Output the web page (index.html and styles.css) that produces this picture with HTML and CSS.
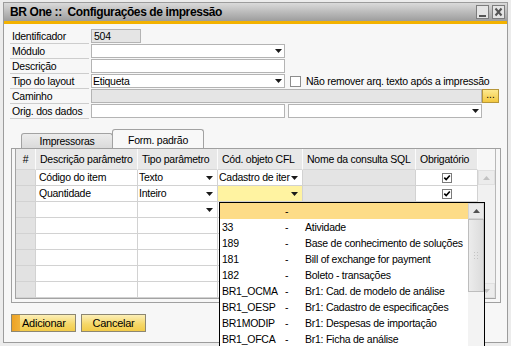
FILE: index.html
```html
<!DOCTYPE html>
<html>
<head>
<meta charset="utf-8">
<title>Configurações de impressão</title>
<link rel="stylesheet" href="styles.css">
</head>
<body>
<div class="window">
  <div class="titlebar">
    <span class="title">BR One :: &nbsp;Configurações de impressão</span>
    <span class="tb-btns">
      <svg class="tb-btn" width="13" height="14" viewBox="0 0 13 14"><rect x=".5" y=".5" width="12" height="13" fill="#e4e4e4" stroke="#7c7c7c"/><rect x="3" y="10" width="7" height="2" fill="#555"/></svg>
      <svg class="tb-btn" width="13" height="14" viewBox="0 0 13 14"><rect x=".5" y=".5" width="12" height="13" fill="#e4e4e4" stroke="#7c7c7c"/><path d="M3.5 3.5l6 7M9.5 3.5l-6 7" stroke="#555" stroke-width="2"/></svg>
    </span>
  </div>
  <div class="accent"></div>
  <div class="content">
    <div class="form">
      <div class="row"><div class="lbl">Identificador</div><div class="fld ro w50">504</div></div>
      <div class="row"><div class="lbl">Módulo</div><div class="fld combo w194"><span class="txt"></span><svg class="arr" width="7" height="4" viewBox="0 0 7 4"><path d="M0 0h7L3.5 4z"/></svg></div></div>
      <div class="row"><div class="lbl">Descrição</div><div class="fld w194"></div></div>
      <div class="row"><div class="lbl">Tipo do layout</div><div class="fld combo w194"><span class="txt">Etiqueta</span><svg class="arr" width="7" height="4" viewBox="0 0 7 4"><path d="M0 0h7L3.5 4z"/></svg></div><div class="chk"><span class="cbox"></span><span>Não remover arq. texto após a impressão</span></div></div>
      <div class="row"><div class="lbl">Caminho</div><div class="fld ro w391"></div><div class="dots">...</div></div>
      <div class="row"><div class="lbl">Orig. dos dados</div><div class="fld w194"></div><div class="fld combo w194 gap3"><span class="txt"></span><svg class="arr" width="7" height="4" viewBox="0 0 7 4"><path d="M0 0h7L3.5 4z"/></svg></div></div>
    </div>

    <div class="tabs">
      <div class="tab">Impressoras</div>
      <div class="tab active">Form. padrão</div>
    </div>

    <div class="panel">
      <div class="gridwrap">
        <div class="grid">
          <div class="h ctr">#</div>
          <div class="h">Descrição parâmetro</div>
          <div class="h">Tipo parâmetro</div>
          <div class="h">Cód. objeto CFL</div>
          <div class="h">Nome da consulta SQL</div>
          <div class="h">Obrigatório</div>
          <div class="h blank"></div>

          <div class="vscroll">
            <div class="sbtn"><svg width="7" height="4" viewBox="0 0 7 4"><path d="M0 4h7L3.5 0z"/></svg></div>
            <div class="strack"></div>
            <div class="sbtn"><svg width="7" height="4" viewBox="0 0 7 4"><path d="M0 0h7L3.5 4z"/></svg></div>
          </div>

          <div class="n"></div><div class="d">Código do item</div><div class="d cb"><span class="txt">Texto</span><svg class="arr" width="7" height="4" viewBox="0 0 7 4"><path d="M0 0h7L3.5 4z"/></svg></div><div class="d cb"><span class="txt">Cadastro de iter</span><svg class="arr" width="7" height="4" viewBox="0 0 7 4"><path d="M0 0h7L3.5 4z"/></svg></div><div class="g"></div><div class="d ck"><svg width="10" height="10" viewBox="0 0 10 10"><rect x=".5" y=".5" width="9" height="9" fill="#fff" stroke="#7a7a7a"/><path d="M2.3 4.6l1.9 2 3.6-4.2" fill="none" stroke="#000" stroke-width="1.6"/></svg></div>

          <div class="n"></div><div class="d">Quantidade</div><div class="d cb"><span class="txt">Inteiro</span><svg class="arr" width="7" height="4" viewBox="0 0 7 4"><path d="M0 0h7L3.5 4z"/></svg></div><div class="d cb yel"><span class="txt"></span><svg class="arr" width="7" height="4" viewBox="0 0 7 4"><path d="M0 0h7L3.5 4z"/></svg></div><div class="g"></div><div class="d ck"><svg width="10" height="10" viewBox="0 0 10 10"><rect x=".5" y=".5" width="9" height="9" fill="#fff" stroke="#7a7a7a"/><path d="M2.3 4.6l1.9 2 3.6-4.2" fill="none" stroke="#000" stroke-width="1.6"/></svg></div>

          <div class="n"></div><div class="d"></div><div class="d cb"><span class="txt"></span><svg class="arr" width="7" height="4" viewBox="0 0 7 4"><path d="M0 0h7L3.5 4z"/></svg></div><div class="d"></div><div class="g"></div><div class="d"></div>
          <div class="n"></div><div class="d"></div><div class="d"></div><div class="d"></div><div class="g"></div><div class="d"></div>
          <div class="n"></div><div class="d"></div><div class="d"></div><div class="d"></div><div class="g"></div><div class="d"></div>
          <div class="n"></div><div class="d"></div><div class="d"></div><div class="d"></div><div class="g"></div><div class="d"></div>
          <div class="n"></div><div class="d"></div><div class="d"></div><div class="d"></div><div class="g"></div><div class="d"></div>
          <div class="n"></div><div class="d"></div><div class="d"></div><div class="d"></div><div class="g"></div><div class="d"></div>
        </div>

        <div class="popup">
          <div class="plist">
            <div class="prow sel"><span class="pc"></span><span class="pd">-</span><span class="pn"></span></div>
            <div class="prow"><span class="pc">33</span><span class="pd">-</span><span class="pn">Atividade</span></div>
            <div class="prow"><span class="pc">189</span><span class="pd">-</span><span class="pn">Base de conhecimento de soluções</span></div>
            <div class="prow"><span class="pc">181</span><span class="pd">-</span><span class="pn">Bill of exchange for payment</span></div>
            <div class="prow"><span class="pc">182</span><span class="pd">-</span><span class="pn">Boleto - transações</span></div>
            <div class="prow"><span class="pc">BR1_OCMA</span><span class="pd">-</span><span class="pn">Br1: Cad. de modelo de análise</span></div>
            <div class="prow"><span class="pc">BR1_OESP</span><span class="pd">-</span><span class="pn">Br1: Cadastro de especificações</span></div>
            <div class="prow"><span class="pc">BR1MODIP</span><span class="pd">-</span><span class="pn">Br1: Despesas de importação</span></div>
            <div class="prow"><span class="pc">BR1_OFCA</span><span class="pd">-</span><span class="pn">Br1: Ficha de análise</span></div>
          </div>
          <div class="pscroll">
            <div class="pup"><svg width="7" height="4" viewBox="0 0 7 4"><path d="M0 4h7L3.5 0z"/></svg></div>
            <div class="pthumb"><svg width="5" height="8" viewBox="0 0 5 8"><g fill="#c4c4c4"><rect x="0" y="0" width="1" height="1"/><rect x="3" y="0" width="1" height="1"/><rect x="0" y="3" width="1" height="1"/><rect x="3" y="3" width="1" height="1"/><rect x="0" y="6" width="1" height="1"/><rect x="3" y="6" width="1" height="1"/></g></svg></div>
            <div class="ptrack"></div>
          </div>
        </div>
      </div>
    </div>

    <div class="buttons">
      <div class="btn primary">Adicionar</div>
      <div class="btn">Cancelar</div>
    </div>
  </div>
</div>
</body>
</html>
```

FILE: styles.css
```css
* { box-sizing: border-box; }
html, body { margin: 0; padding: 0; overflow: hidden; }
body {
  width: 511px;
  height: 346px;
  background: #ececec;
  font-family: "Liberation Sans", Arial, sans-serif;
  font-size: 10.5px;
  letter-spacing: -0.25px;
  color: #000;
}
.window {
  margin: 2px 0 0 3px;
  width: 505px;
  height: 341px;
  border: 1px solid #9c9c9c;
  background: #f7f7f7;
}
.titlebar {
  height: 18px;
  display: flex;
  align-items: center;
  justify-content: space-between;
  padding: 0 2px 0 6px;
  background: linear-gradient(#dadada, #9d9d9d);
}
.title { font-weight: bold; font-size: 12px; letter-spacing: -0.4px; white-space: nowrap; }
.tb-btns { display: flex; gap: 3px; }
.tb-btn { display: block; }
.accent { height: 3px; background: #f3b200; }
.content { padding: 5px 0 0 6px; }

.form { display: flex; flex-direction: column; }
.row { display: flex; height: 15px; align-items: flex-start; }
.lbl {
  width: 79px;
  height: 15px;
  border-bottom: 1px solid #cdcdcd;
  padding-left: 2px;
  line-height: 14px;
  margin-right: 2px;
  white-space: nowrap;
}
.fld {
  height: 14px;
  border: 1px solid #b4b4b4;
  background: #fff;
  line-height: 12px;
  padding-left: 1px;
  display: flex;
  align-items: center;
}
.fld.ro { background: #e5e5e5; padding-left: 2px; }
.w50 { width: 50px; }
.w194 { width: 194px; }
.w391 { width: 391px; }
.gap3 { margin-left: 3px; }
.combo .txt, .cb .txt { flex: 1; overflow: hidden; white-space: nowrap; }
.combo .arr { margin-right: 2px; fill: #1a1a1a; flex: none; }
.chk { display: flex; align-items: center; margin-left: 5px; height: 14px; line-height: 14px; white-space: nowrap; }
.cbox { width: 11px; height: 11px; border: 1px solid #8d8d8d; background: #fff; margin-right: 5px; margin-top: 1px; }
.dots {
  width: 17px;
  height: 14px;
  border: 1px solid #b7973a;
  background: linear-gradient(#fde98f, #f3c840);
  text-align: center;
  line-height: 10px;
  font-size: 10px;
  letter-spacing: 0;
}

.tabs { display: flex; align-items: flex-end; height: 19px; margin-top: 10px; padding-left: 11px; }
.tab {
  width: 92px;
  height: 15px;
  border: 1px solid #a2a2a2;
  border-bottom: none;
  border-radius: 3px 3px 0 0;
  background: linear-gradient(#ececec, #dadada);
  text-align: center;
  line-height: 14px;
}
.tab.active {
  height: 19px;
  margin-left: -1px;
  background: #f8f8f8;
  line-height: 20px;
}

.panel {
  margin-left: 1px;
  width: 490px;
  height: 155px;
  border: 1px solid #a0a0a0;
  padding: 0 0 0 3px;
}
.gridwrap {
  position: relative;
  width: 481px;
  border-left: 1px solid #a3a3a3;
  border-right: 1px solid #b8b8b8;
  border-bottom: 1px solid #a3a3a3;
}
.grid {
  display: grid;
  grid-template-columns: 20px 102px 80px 85px 113px 62px 17px;
  grid-template-rows: 21px repeat(8, 16px);
}
.grid > div { border-right: 1px solid #d2d2d2; border-bottom: 1px solid #d2d2d2; white-space: nowrap; overflow: hidden; }
.h { background: #e8e8e8; padding-left: 4px; line-height: 20px; border-right-color: #fbfbfb !important; border-bottom-color: #d6d6d6 !important; }
.h.ctr { text-align: center; padding-left: 0; }
.h.blank { background: #f7f7f7; border: none !important; }
.n { background: #e2e2e2; }
.d { background: #fff; padding-left: 3px; line-height: 15px; }
.g { background: #e4e4e4; }
.cb { display: flex; align-items: center; padding-left: 1px; }
.cb .arr { fill: #1a1a1a; margin-right: 4px; flex: none; }
.yel { background: #fff3a1; }
.ck { display: flex; align-items: center; justify-content: center; padding-left: 0; }
.ck svg { display: block; margin-left: 1px; }

.vscroll {
  grid-column: 7;
  grid-row: 2 / span 8;
  display: flex;
  flex-direction: column;
  background: #f1f1f1;
  border: none !important;
}
.sbtn { height: 15px; display: flex; align-items: center; justify-content: center; background: #ececec; border: 1px solid #e0e0e0; }
.sbtn svg { fill: #c2c2c2; }
.strack { flex: 1; }

.popup {
  position: absolute;
  left: 203px;
  top: 53px;
  width: 266px;
  height: 160px;
  border: 1px solid #000;
  background: #fff;
  display: flex;
}
.plist { flex: 1; }
.prow { display: flex; height: 16px; line-height: 16px; white-space: nowrap; }
.prow.sel { background: #fddc87; }
.pc { width: 63px; padding-left: 2px; }
.pd { width: 22px; padding-left: 2px; }
.pn { flex: 1; }
.pscroll { width: 16px; display: flex; flex-direction: column; background: #f3f3f3; }
.pup { height: 16px; display: flex; align-items: center; justify-content: center; background: #e9e9e9; border: 1px solid #d4d4d4; }
.pup svg { fill: #505050; }
.pthumb {
  height: 73px;
  border: 1px solid #bdbdbd;
  background: linear-gradient(90deg, #ececec, #dcdcdc);
  display: flex;
  align-items: center;
  justify-content: center;
}
.ptrack { flex: 1; }

.buttons { display: flex; gap: 5px; margin-top: 11px; padding-left: 1px; }
.btn {
  width: 65px;
  height: 18px;
  border: 1px solid #8d8772;
  background: linear-gradient(#fcefb8, #f6d86a 55%, #f2cb48);
  text-align: center;
  line-height: 16px;
  font-size: 11px;
}
.btn.primary {
  text-align: left;
  padding-left: 10px;
  background: linear-gradient(90deg, #eda224 0, #f1b23a 8px, transparent 8px), linear-gradient(#fcefb8, #f6d86a 55%, #f2cb48);
}
```
